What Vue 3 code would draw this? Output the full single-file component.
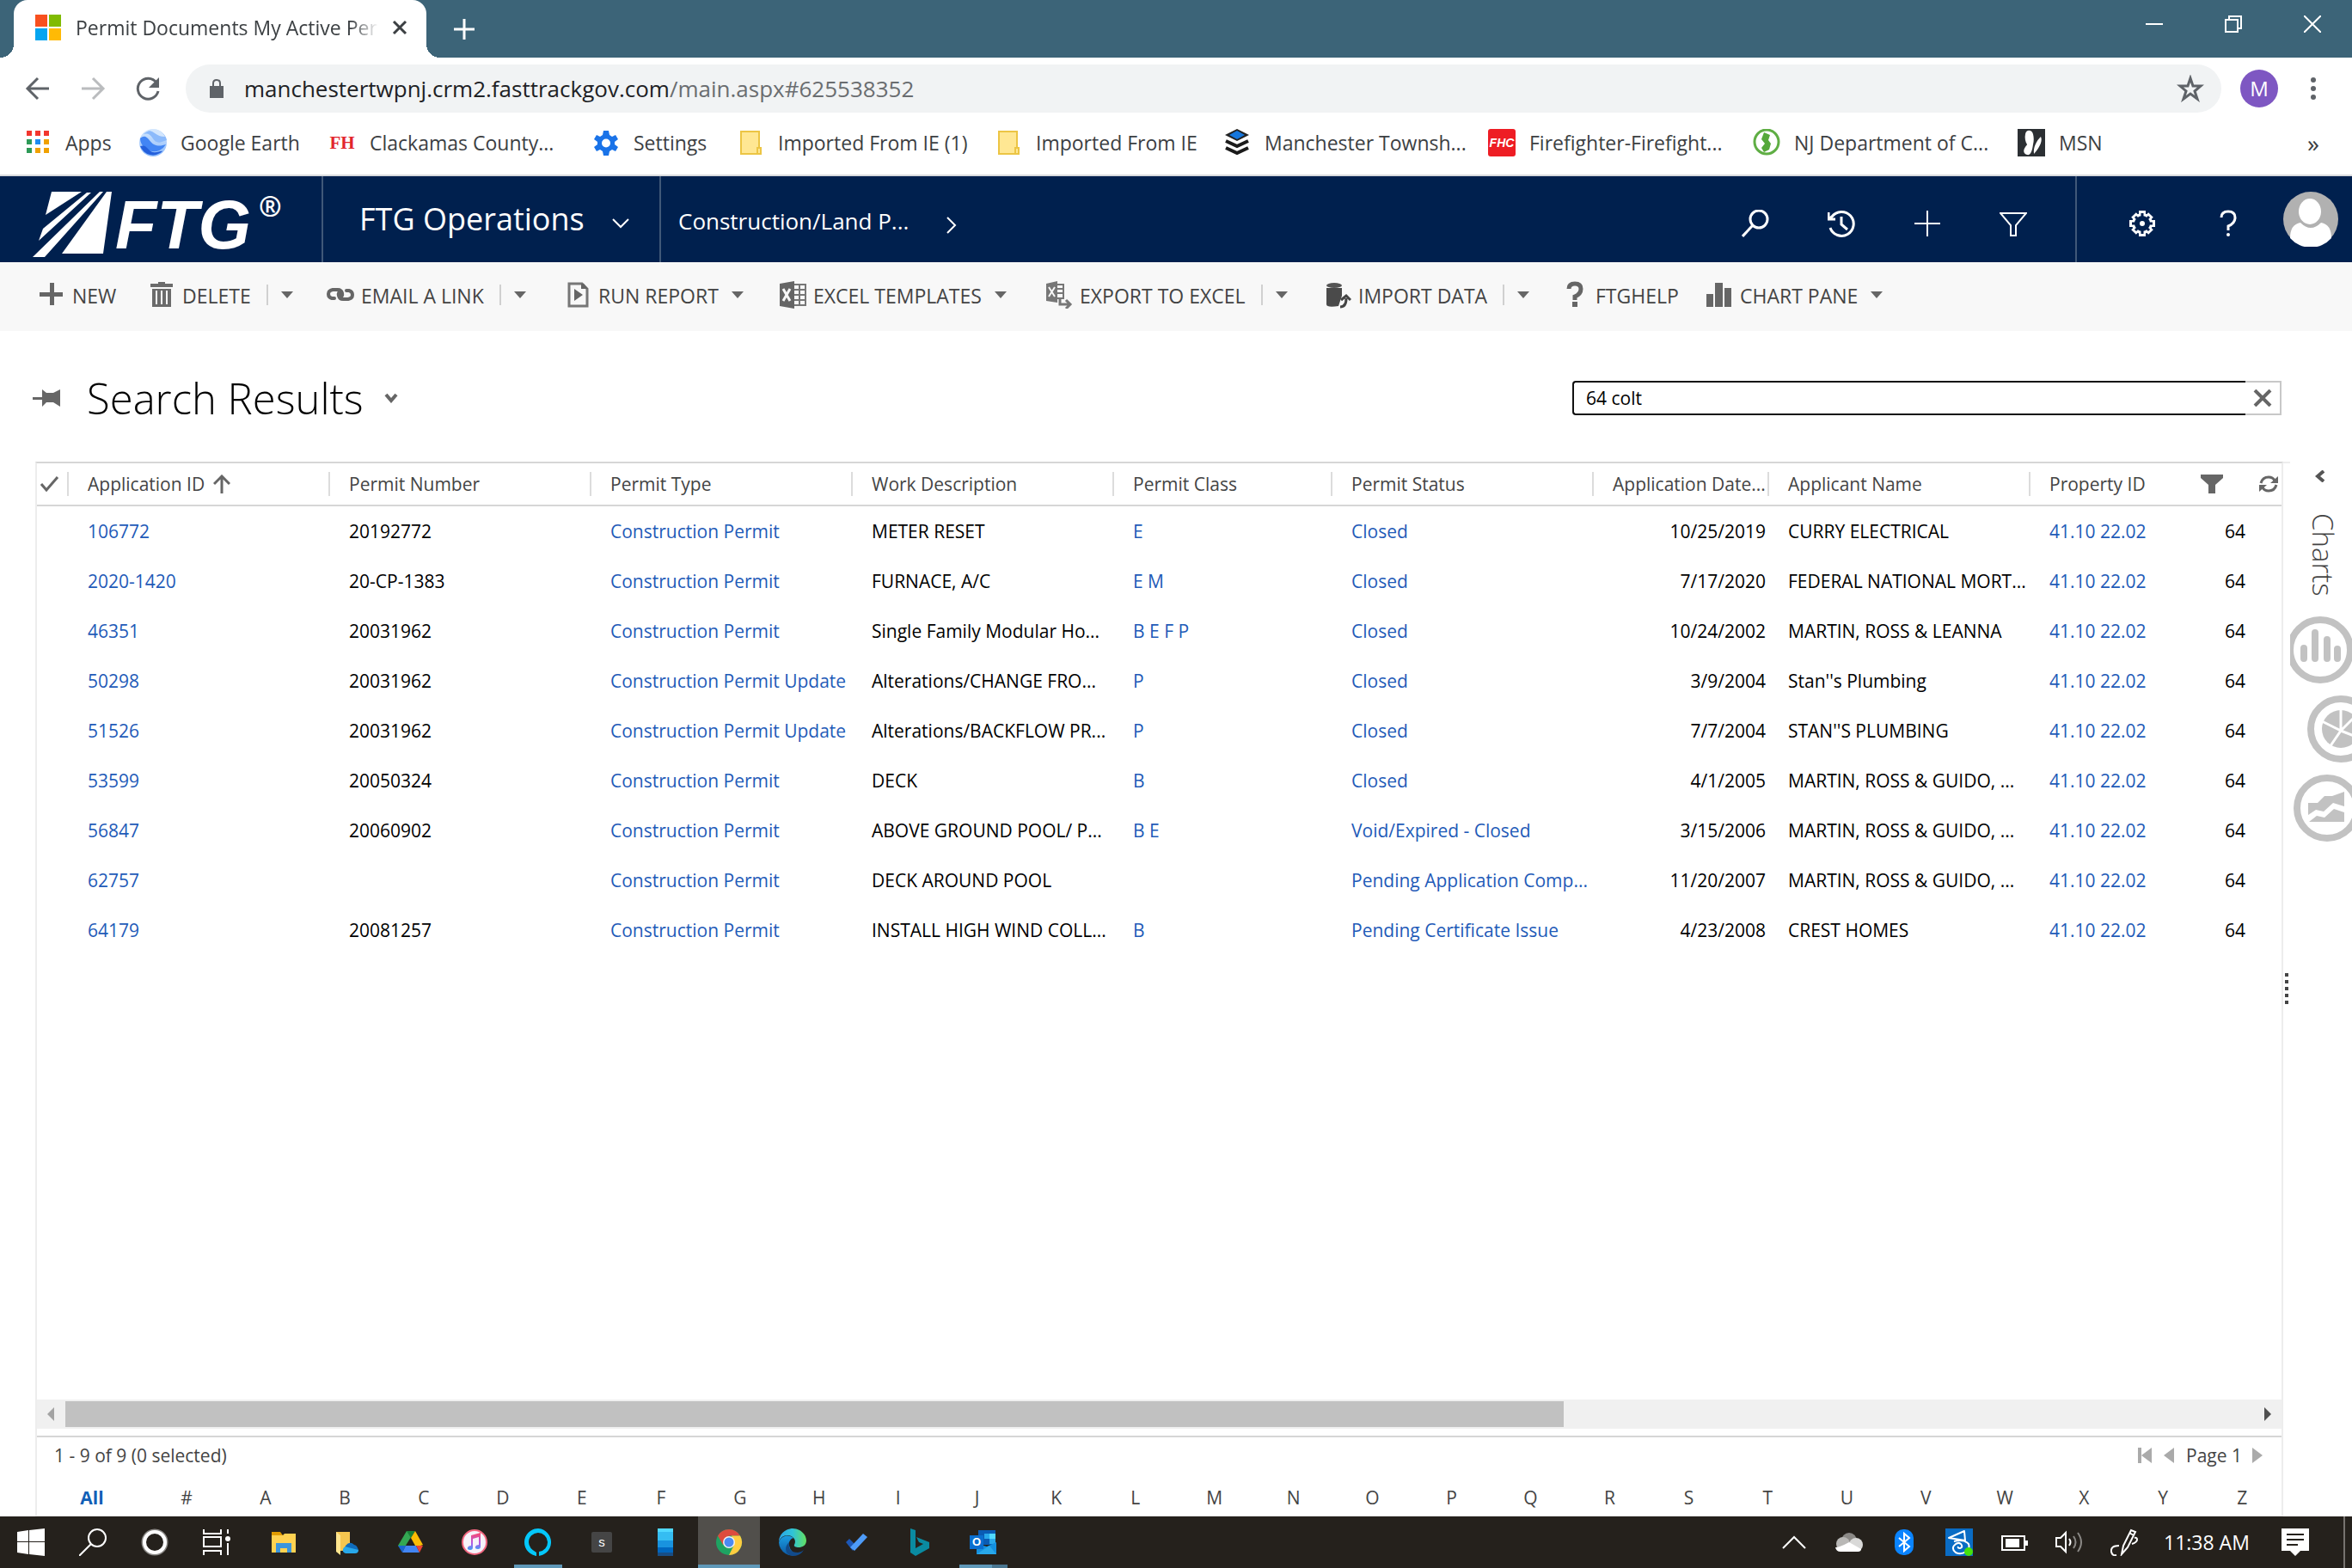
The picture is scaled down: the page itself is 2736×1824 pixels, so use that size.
<script setup>
import { ref } from 'vue'

const bookmarks = [
  { label: 'Apps', icon: 'apps' },
  { label: 'Google Earth', icon: 'earth' },
  { label: 'Clackamas County...', badge: 'FH' },
  { label: 'Settings', icon: 'settings' },
  { label: 'Imported From IE (1)', icon: 'folder' },
  { label: 'Imported From IE', icon: 'folder' },
  { label: 'Manchester Townsh...', icon: 'stack' },
  { label: 'Firefighter-Firefight...', badge: 'FHC' },
  { label: 'NJ Department of C...', icon: 'nj' },
  { label: 'MSN', icon: 'msn' }
]

const commands = [
  { label: 'NEW', icon: 'new' },
  { label: 'DELETE', icon: 'trash', split: true, menu: true },
  { label: 'EMAIL A LINK', icon: 'link', split: true, menu: true },
  { label: 'RUN REPORT', icon: 'report', menu: true },
  { label: 'EXCEL TEMPLATES', icon: 'excel', menu: true },
  { label: 'EXPORT TO EXCEL', icon: 'export', split: true, menu: true },
  { label: 'IMPORT DATA', icon: 'import', split: true, menu: true },
  { label: 'FTGHELP', icon: 'helpbold' },
  { label: 'CHART PANE', icon: 'bars', menu: true }
]

const columns = [
  'Application ID', 'Permit Number', 'Permit Type', 'Work Description',
  'Permit Class', 'Permit Status', 'Application Date...', 'Applicant Name'
]

const P = 'Construction Permit'
const U = 'Construction Permit Update'
const rows = [
  ['106772', '20192772', P, 'METER RESET', 'E', 'Closed', '10/25/2019', 'CURRY ELECTRICAL'],
  ['2020-1420', '20-CP-1383', P, 'FURNACE, A/C', 'E M', 'Closed', '7/17/2020', 'FEDERAL NATIONAL MORT...'],
  ['46351', '20031962', P, 'Single Family Modular Ho...', 'B E F P', 'Closed', '10/24/2002', 'MARTIN, ROSS & LEANNA'],
  ['50298', '20031962', U, 'Alterations/CHANGE FRO...', 'P', 'Closed', '3/9/2004', "Stan''s Plumbing"],
  ['51526', '20031962', U, 'Alterations/BACKFLOW PR...', 'P', 'Closed', '7/7/2004', "STAN''S PLUMBING"],
  ['53599', '20050324', P, 'DECK', 'B', 'Closed', '4/1/2005', 'MARTIN, ROSS & GUIDO, ...'],
  ['56847', '20060902', P, 'ABOVE GROUND POOL/ P...', 'B E', 'Void/Expired - Closed', '3/15/2006', 'MARTIN, ROSS & GUIDO, ...'],
  ['62757', '', P, 'DECK AROUND POOL', '', 'Pending Application Comp...', '11/20/2007', 'MARTIN, ROSS & GUIDO, ...'],
  ['64179', '20081257', P, 'INSTALL HIGH WIND COLL...', 'B', 'Pending Certificate Issue', '4/23/2008', 'CREST HOMES']
]
const linked = [0, 2, 4, 5]

const letters = ['All', '#', ...'ABCDEFGHIJKLMNOPQRSTUVWXYZ']

const system = [['start', 'Start'], ['lens', 'Search'], ['cortana', 'Cortana'], ['taskview', 'Task View']]
const pinned = [
  { icon: 'explorer', name: 'File Explorer' },
  { icon: 'odfolder', name: 'OneDrive folder' },
  { icon: 'gdrive', name: 'Google Drive' },
  { icon: 'itunes', name: 'iTunes' },
  { icon: 'alexa', name: 'Alexa', state: 'running' },
  { icon: 'sapp', name: 'Sway', mark: 's' },
  { icon: 'phone', name: 'Your Phone' },
  { icon: 'chrome', name: 'Chrome', state: 'active' },
  { icon: 'edge', name: 'Edge' },
  { icon: 'todo', name: 'To Do' },
  { icon: 'bing', name: 'Bing' },
  { icon: 'outlook', name: 'Outlook', state: 'running multi', mark: 'O' }
]
const tray = [
  ['up', 'Show hidden icons'], ['cloud', 'OneDrive'], ['bluetooth', 'Bluetooth'], ['agent', 'Agent'],
  ['battery', 'Battery'], ['volume', 'Volume'], ['pen', 'Windows Ink']
]

const query = ref('64 colt')
</script>

<template>
  <svg class="defs" aria-hidden="true">
    <defs>
      <linearGradient id="gEarth" x1="0" y1="0" x2="0" y2="1"><stop offset="0" stop-color="#d5e8fd" /><stop offset="1" stop-color="#8ab9fb" /></linearGradient>
      <linearGradient id="gEdge" x1="0" y1="0" x2="1" y2="0"><stop offset="0" stop-color="#2aa5e8" /><stop offset=".5" stop-color="#2fc3d8" /><stop offset="1" stop-color="#63e060" /></linearGradient>
      <linearGradient id="gEdge2" x1="0" y1="0" x2="0" y2="1"><stop offset="0" stop-color="#1b9de2" /><stop offset="1" stop-color="#0c59a4" /></linearGradient>
      <linearGradient id="gTunes" x1="0" y1="0" x2="0" y2="1"><stop offset="0" stop-color="#fb4a6a" /><stop offset=".6" stop-color="#b558e6" /><stop offset="1" stop-color="#3aa0f5" /></linearGradient>
    </defs>

    <symbol id="apps" viewBox="0 0 32 32">
      <path fill="#f2362e" d="M3 2h6v6H3zM13 2h6v6h-6zM23 2h6v6h-6z" /><path fill="#2e9a57" d="M3 12h6v6H3z" /><path fill="#1e8cf0" d="M13 12h6v6h-6z" /><path fill="#f0a100" d="M23 12h6v6h-6zM13 22h6v6h-6zM23 22h6v6h-6z" /><path fill="#2e9a57" d="M3 22h6v6H3z" />
    </symbol>
    <symbol id="earth" viewBox="0 0 32 32">
      <circle cx="16" cy="16" r="16" fill="url(#gEarth)" /><path fill="#4285f4" d="M1 11c8-7 10 4 16 7s10 1 14 0A16 16 0 0 1 1 11z" /><path fill="#2460dc" d="M1 20c8-3 9 6 15 7 5 1 9-2 11-1A16 16 0 0 1 1 20z" /><path fill="#8cbafb" d="M5 6c9-3 10 7 15 9s8-1 12-2C30 2 16-4 5 6z" /><path fill="#d3e6fd" d="M10 2c8 0 9 7 20 7C26 1 18-2 10 2z" />
    </symbol>
    <symbol id="settings" viewBox="0 0 32 32">
      <path fill="#1a73e8" fill-rule="evenodd" d="M13 2h6l1 5 3 2 4-2 3 5-4 3v3l4 3-3 5-4-2-3 2-1 5h-6l-1-5-3-2-4 2-3-5 4-3v-3l-4-3 3-5 4 2 3-2zM16 11.500a5 5 0 1 0 0 10 5 5 0 0 0 0-10z" />
    </symbol>
    <symbol id="folder" viewBox="0 0 32 32">
      <path fill="#ffe793" stroke="#ecc544" stroke-width="2" d="M5 3h21v19h2v7H5z" /><path fill="none" stroke="#ecc544" stroke-width="2" d="M24 29v-7h3" />
    </symbol>
    <symbol id="stack" viewBox="0 0 32 32">
      <path fill="#222" d="M16 0l14 7-14 7L2 7z" /><path fill="#1576dc" d="M16 2l9 5-9 5-9-5z" /><path fill="none" stroke="#1b1b1b" stroke-width="4" d="M3 14l13 6 13-6M3 22l13 6 13-6" />
    </symbol>
    <symbol id="nj" viewBox="0 0 32 32">
      <circle cx="16" cy="15" r="14" fill="#fff" stroke="#5fae44" stroke-width="3" /><path fill="#55a83a" d="M13 4l7 3-2 6 3 4-2 7-6 3-3-5 4-5-4-5z" />
    </symbol>
    <symbol id="msn" viewBox="0 0 32 32">
      <rect width="32" height="32" fill="#2b2f33" /><path fill="#fff" d="M9 6c1-6 8-5 9 0 1 4 1 8 0 12-1 8-3 13-7 12s-5-5-2-9c1-2 2-2 2-3-2-3-3-8-2-12zM27 9c2 4 0 11-8 20-1-8 3-15 8-20z" />
    </symbol>

    <symbol id="new" viewBox="0 0 32 32"><path fill="#666" d="M14 2h5v11h10v5H19v10h-5V18H2v-5h12z" /></symbol>
    <symbol id="trash" viewBox="0 0 32 32"><path fill="#6b6b6b" fill-rule="evenodd" d="M12 1h8v2h9v4H3V3h9zM5 9h22v21H5zM9 11v16h2V11zM15 11v16h2V11zM21 11v16h2V11z" /></symbol>
    <symbol id="link" viewBox="0 0 32 32"><path fill="none" stroke="#666" stroke-width="4" stroke-linecap="round" stroke-linejoin="round" d="M9 20H6q-4-1-4-5t5-5h6q4 0 5 4 1 4-3 5M23 11h3q4 1 4 5t-5 5h-6q-4 0-5-4-1-4 3-5" /></symbol>
    <symbol id="report" viewBox="0 0 32 32"><path fill="none" stroke="#777" stroke-width="3" d="M6 3h15l6 6v20H6z" /><path fill="#666" d="M12 9l10 7-10 7zM20 3h3l5 6h-8z" /></symbol>
    <symbol id="excel" viewBox="0 0 32 32"><path fill="none" stroke="#777" stroke-width="2" d="M17 4h14v24H17M17 10h14M17 16h14M17 22h14M24 4v24" /><path fill="#666" d="M1 3l17-3v32L1 29z" /><path stroke="#f8f8f8" stroke-width="3" d="M5 9l8 14M13 9L5 23" /></symbol>
    <symbol id="export" viewBox="0 0 32 32"><path fill="none" stroke="#777" stroke-width="2" d="M13 4h8v16H13M14 9h7M14 14h7" /><path fill="#777" d="M1 3l13-3v25L1 23z" /><path stroke="#f8f8f8" stroke-width="2" d="M4 7l7 11M11 7L4 18" /><path fill="none" stroke="#777" stroke-width="3" d="M17 21v6h11M24 22l5 5-5 5" /></symbol>
    <symbol id="import" viewBox="0 0 32 32"><path fill="#4a4a4a" d="M3 8h18v9l-4 12q-14 2-14-2z" /><ellipse cx="12" cy="5" rx="9" ry="3" fill="#555" /><path fill="none" stroke="#444" stroke-width="3" d="M19 30q7 0 7-10M20 22l6-5 5 5" /></symbol>
    <symbol id="helpbold" viewBox="0 0 32 32"><path fill="none" stroke="#666" stroke-width="5" d="M9 9q0-6 7-6t7 6-7 9v4" /><path fill="#666" d="M13 24h6v6h-6z" /></symbol>
    <symbol id="bars" viewBox="0 0 32 32"><path fill="#666" d="M1 15h8v15H1zM11 2h9v28h-9zM22 8h8v22h-8z" /></symbol>

    <symbol id="start" viewBox="0 0 32 32"><path fill="#fff" d="M0 4l13-2v13H0zM14 2l18-2v15H14zM0 16h13v14L0 28zM14 16h18v16l-18-2z" /></symbol>
    <symbol id="lens" viewBox="0 0 32 32"><g fill="none" stroke="#fff" stroke-width="2"><circle cx="21" cy="11" r="10" /><path d="M14 18L0 32" /></g></symbol>
    <symbol id="cortana" viewBox="0 0 32 32"><circle cx="16" cy="16" r="14" fill="none" stroke="#8a8885" stroke-width="3" /><circle cx="16" cy="16" r="12" fill="none" stroke="#fff" stroke-width="4" /></symbol>
    <symbol id="taskview" viewBox="0 0 32 32"><path fill="none" stroke="#fff" stroke-width="2" d="M1 1v5h20V1M1 10h20v11H1zM1 31v-5h20v5M29 1v5M29 17v14" /><circle cx="29" cy="12" r="3" fill="#fff" /></symbol>
    <symbol id="explorer" viewBox="0 0 32 32"><path fill="#e09b00" d="M2 4h10l3 4H2z" /><path fill="#ffd251" d="M2 8h13l2-2h13v22H2z" /><path fill="#3b95dc" d="M7 28V17h18v11h-5v-5h-8v5z" /></symbol>
    <symbol id="odfolder" viewBox="0 0 32 32"><path fill="#f6c64f" d="M3 4h16v22H3z" /><path fill="#ffe58e" d="M3 4l5 4v23l-5-4z" /><path fill="#0f6cbd" d="M14 20q5-6 10-1 3 0 5 6H12z" /><path fill="#28a8ea" d="M14 29q-4-1-3-5t6-2l12 3q0 4-4 4z" /></symbol>
    <symbol id="gdrive" viewBox="0 0 32 32"><path fill="#34a853" d="M11 3h5l2 4L6 26l-5-6z" /><path fill="#188038" d="M11 3h10l-5 8z" /><path fill="#fbbc04" d="M21 3l9 16-3 1h-6l-5-9z" /><path fill="#1967d2" d="M1 20h9l-4 8z" /><path fill="#4285f4" d="M10 20h12l4 8H6z" /><path fill="#ea4335" d="M22 20h8l-4 8z" /></symbol>
    <symbol id="itunes" viewBox="0 0 32 32"><circle cx="16" cy="16" r="14" fill="#f6f3fa" stroke="#f26780" stroke-width="2" /><path fill="url(#gTunes)" d="M12 8l11-3v16q0 3-3 3-4 0-3-3 1-2 4-2v-9l-7 2v10q0 3-3 3-4 0-3-3 1-2 4-2z" /></symbol>
    <symbol id="alexa" viewBox="0 0 32 32"><path fill="#04c8fb" fill-rule="evenodd" d="M16 0a16 16 0 1 1-2 32V28Q5 23 5 16a11 11 0 1 1 12 11v5h-1A16 16 0 0 1 16 0z" /></symbol>
    <symbol id="sapp" viewBox="0 0 32 32"><rect x="4" y="4" width="24" height="24" rx="2" fill="#454545" /></symbol>
    <symbol id="phone" viewBox="0 0 32 32"><path fill="#50d9ff" d="M7 0h18v4H7z" /><path fill="#35bdf2" d="M7 4h18v10H7z" /><path fill="#1993df" d="M7 14h18v8H7z" /><path fill="#0067bf" d="M7 22h18v6H7z" /><path fill="#184e86" d="M7 28h18v4H7z" /></symbol>
    <symbol id="chrome" viewBox="0 0 32 32"><circle cx="16" cy="16" r="15" fill="#1ea362" /><path fill="#dd4b3e" d="M3 8.500A15 15 0 0 1 29 8.500H16L9 19z" /><path fill="#ffcd40" d="M29 8.500A15 15 0 0 1 16 31l6-12-3-10.500z" /><circle cx="16" cy="16" r="7" fill="#f1f1f1" /><circle cx="16" cy="16" r="5.500" fill="#4a8af4" /></symbol>
    <symbol id="edge" viewBox="0 0 32 32"><path fill="url(#gEdge2)" d="M0 16C3 7 13 7 17 11q-6 2-5 9 2 9 11 10A16 16 0 0 1 0 16z" /><path fill="url(#gEdge)" d="M0 15C1 3 12 0 16 0c9 0 16 7 16 14 0 6-5 8-9 8-3 0-6-1-5-3 3-5-1-11-8-11Q3 8 0 15z" /><path fill="#124b8b" d="M12 16q-2 12 10 12 4 0 7-3-4 7-12 7C8 32 5 22 12 16z" /></symbol>
    <symbol id="todo" viewBox="0 0 32 32"><path fill="#1c57b6" d="M4 16l4-4 6 6-2 8z" /><path fill="#4e9bf7" d="M9 22L24 6l5 4-15 16z" /></symbol>
    <symbol id="bing" viewBox="0 0 32 32"><path fill="#0a8ba1" d="M5 0l6 2v21l9-5-5-2-3-6 15 6v7l-16 9-6-4z" /></symbol>
    <symbol id="outlook" viewBox="0 0 32 32"><path fill="#0a5cb4" d="M10 2h20v17H10z" /><path fill="#28a8ea" d="M17 6h6v6h-6zM23 12h7v6h-7z" /><path fill="#50d9ff" d="M23 6h7v6h-7z" /><path fill="#1490df" d="M8 18l12 3 11-5v14H8z" /><path fill="#28a8ea" d="M8 30l15-10 8 10z" /><path fill="#0a6fd0" d="M0 8h16v16H0z" /></symbol>

    <symbol id="up" viewBox="0 0 32 32"><path fill="none" stroke="#fff" stroke-width="2" d="M3 23l13-13 13 13" /></symbol>
    <symbol id="cloud" viewBox="0 0 32 32"><circle cx="16" cy="14" r="9" fill="#8b8986" /><circle cx="9" cy="18" r="8" fill="#b9b8b6" /><circle cx="24" cy="19" r="8" fill="#d9d9d8" /><path fill="#fff" d="M0 22q5 0 16-6l14 8q0 3-4 3H6q-5 0-6-5z" /></symbol>
    <symbol id="bluetooth" viewBox="0 0 32 32"><rect x="5" y="1" width="22" height="30" rx="10" fill="#0a84ff" /><path fill="none" stroke="#fff" stroke-width="2" d="M10 11l12 10-6 5V6l6 5-12 10" /></symbol>
    <symbol id="agent" viewBox="0 0 32 32"><rect width="32" height="32" fill="#0a6cc4" /><path fill="none" stroke="#fff" stroke-width="2" stroke-linejoin="round" d="M4 11L22 3l1 11zM10 15q12-3 17 3 2 6-3 9-6 4-12 1-5-4-2-8 4-5 8-2 3 4-1 5-3 0-2-2" /><circle cx="27" cy="27" r="5" fill="#45e20c" /></symbol>
    <symbol id="battery" viewBox="0 0 32 32"><path fill="none" stroke="#fff" stroke-width="2" d="M2 9h26v16H2z" /><path fill="#fff" d="M6 12h16v10H6zM29 14h3v6h-3z" /></symbol>
    <symbol id="volume" viewBox="0 0 32 32"><g fill="none" stroke="#fff" stroke-width="2"><path d="M1 11h5l6-6v22l-6-6H1z" /><path d="M16 12q3 4 0 8" /><path stroke="#8a8885" d="M21 9q5 7 0 14M26 5q8 11 0 22" /></g></symbol>
    <symbol id="pen" viewBox="0 0 32 32"><path fill="none" stroke="#fff" stroke-width="2" d="M13 30l2-10L24 2l5 2-9 18zM22 5l5 3M10 20q-10 0-9 7 1 5 6 4M25 18q6-2 6-5t-3-2" /></symbol>
  </svg>

  <div class="screen">
    <header class="browser">
      <div class="tabstrip">
        <div class="tab">
          <svg class="i32" viewBox="0 0 32 32"><path fill="#f8501f" d="M1 1h14v14H1z" /><path fill="#80bb03" d="M17 1h14v14H17z" /><path fill="#04a5f0" d="M1 17h14v14H1z" /><path fill="#ffba05" d="M17 17h14v14H17z" /></svg>
          <span class="tab-title">Permit Documents My Active Permits</span>
          <button class="plain" aria-label="Close tab"><svg width="18" height="18" viewBox="0 0 18 18"><path fill="none" stroke="#3c4043" stroke-width="3" d="M2 2l14 14M16 2L2 16" /></svg></button>
        </div>
        <button class="plain newtab" aria-label="New tab"><svg width="24" height="24" viewBox="0 0 24 24"><path stroke="#fff" stroke-width="3" d="M12 0v24M0 12h24" /></svg></button>
        <div class="winbtns">
          <button class="plain" aria-label="Minimize"><svg width="20" height="20" viewBox="0 0 20 20"><path stroke="#fff" stroke-width="2" d="M0 10h20" /></svg></button>
          <button class="plain" aria-label="Restore"><svg width="20" height="20" viewBox="0 0 20 20"><path fill="none" stroke="#fff" stroke-width="2" d="M1 5h14v14H1zM5 5V1h14v14h-4" /></svg></button>
          <button class="plain" aria-label="Close window"><svg width="20" height="20" viewBox="0 0 20 20"><path stroke="#fff" stroke-width="2" d="M0 0l20 20M20 0L0 20" /></svg></button>
        </div>
      </div>

      <div class="toolbar">
        <button class="plain nav" aria-label="Back"><svg class="i32" viewBox="0 0 32 32"><path fill="none" stroke="#5f6368" stroke-width="3" d="M29 16H5M16 4L4 16l12 12" /></svg></button>
        <button class="plain nav" aria-label="Forward"><svg class="i32" viewBox="0 0 32 32"><path fill="none" stroke="#babcbe" stroke-width="3" d="M3 16h24M16 4l12 12-12 12" /></svg></button>
        <button class="plain nav" aria-label="Reload"><svg class="i32" viewBox="0 0 32 32"><path fill="none" stroke="#5f6368" stroke-width="3" d="M26 9a12 12 0 1 0 2 10" /><path fill="#5f6368" d="M29 3v12H17z" /></svg></button>
        <div class="omnibox">
          <svg width="16" height="22" viewBox="0 0 16 22"><path fill="#5f6368" d="M0 8h16v14H0z" /><path fill="none" stroke="#5f6368" stroke-width="2" d="M4 9V5q0-4 4-4t4 4v4" /></svg>
          <span class="url">manchestertwpnj.crm2.fasttrackgov.com<span>/main.aspx#625538352</span></span>
          <button class="plain" aria-label="Bookmark this page"><svg class="i32" viewBox="0 0 32 32"><path fill="none" stroke="#5f6368" stroke-width="3" d="M16 4l3 9h9l-7 6 3 9-8-6-8 6 3-9-7-6h9z" /></svg></button>
        </div>
        <button class="plain profile">M</button>
        <button class="plain dots" aria-label="Menu"><svg width="6" height="28" viewBox="0 0 6 28"><g fill="#5f6368"><circle cx="3" cy="4" r="3" /><circle cx="3" cy="14" r="3" /><circle cx="3" cy="24" r="3" /></g></svg></button>
      </div>

      <nav class="bookmarks">
        <a v-for="(b, i) in bookmarks" :key="i" href="#">
          <span v-if="b.badge" class="badge" :class="b.badge.toLowerCase()">{{ b.badge }}</span>
          <svg v-else class="i32"><use :href="'#' + b.icon" /></svg>
          <span>{{ b.label }}</span>
        </a>
        <button class="plain more" aria-label="More bookmarks">»</button>
      </nav>
    </header>

    <header class="crm">
      <a class="logo" href="#">
        <svg width="300" height="88" viewBox="0 0 300 88" fill="#fff" aria-label="FTG">
          <path d="M26 8h35L19 35zM67 9h5L11 65l5-14zM82 8h4L18 84H4zM90 8h6L86 80H38z" />
          <text x="100" y="74" font-family="Liberation Sans, sans-serif" font-weight="700" font-style="italic" font-size="79">FTG</text>
          <text x="267" y="37" font-family="Open Sans, sans-serif" font-weight="700" font-size="32">®</text>
        </svg>
      </a>
      <button class="plain area">FTG Operations<svg width="20" height="12" viewBox="0 0 20 12"><path fill="none" stroke="#fff" stroke-width="2" d="M1 1l9 9 9-9" /></svg></button>
      <button class="plain sub">Construction/Land P...<svg width="12" height="20" viewBox="0 0 12 20"><path fill="none" stroke="#fff" stroke-width="2" d="M1 1l9 9-9 9" /></svg></button>
      <div class="crm-tools">
        <button class="plain" aria-label="Search"><svg class="i32" viewBox="0 0 32 32"><g fill="none" stroke="#fff" stroke-width="3"><circle cx="20" cy="11" r="10" /><path d="M13 18L1 31" /></g></svg></button>
        <button class="plain" aria-label="Recent"><svg class="i32" viewBox="0 0 32 32"><path fill="none" stroke="#fff" stroke-width="3" d="M3 21A14 14 0 1 0 5 8L1 11M1 3v8h8M16 8v9l7 6" /></svg></button>
        <button class="plain" aria-label="Create"><svg class="i32" viewBox="0 0 32 32"><path stroke="#fff" stroke-width="2" d="M16 1v30M1 16h30" /></svg></button>
        <button class="plain" aria-label="Advanced find"><svg class="i32" viewBox="0 0 32 32"><path fill="none" stroke="#fff" stroke-width="2" d="M1 4h30L19 18v12h-6V18z" /></svg></button>
      </div>
      <div class="crm-user">
        <button class="plain" aria-label="Settings">
          <svg class="i32" viewBox="0 0 32 32">
            <path stroke="#fff" stroke-width="8" d="M16 1v30M1 16h30M6 6l20 20M26 6L6 26" />
            <circle cx="16" cy="16" r="12" fill="#fff" />
            <path stroke="#00204e" stroke-width="3" d="M16 4v24M4 16h24M8 8l16 16M24 8L8 24" />
            <circle cx="16" cy="16" r="9" fill="#00204e" /><circle cx="16" cy="16" r="3" fill="#fff" />
          </svg>
        </button>
        <button class="plain" aria-label="Help"><svg class="i32" viewBox="0 0 32 32"><path fill="none" stroke="#fff" stroke-width="3" d="M8 9q0-7 8-7t8 7-8 10v5" /><circle cx="16" cy="29" r="2" fill="#fff" /></svg></button>
        <svg class="avatar" viewBox="0 0 64 64"><circle cx="32" cy="32" r="32" fill="#b1b1b1" /><path fill="#fff" d="M8 54q0-16 12-18 12 12 24 0 12 2 12 18a32 32 0 0 1-48 0z" /><ellipse cx="31" cy="23" rx="13" ry="15" fill="#fff" /></svg>
      </div>
    </header>

    <div class="commands">
      <div v-for="c in commands" :key="c.label" class="cmd">
        <button class="plain"><svg class="i32"><use :href="'#' + c.icon" /></svg><span>{{ c.label }}</span></button>
        <i v-if="c.split" class="split"></i>
        <button v-if="c.menu" class="plain caret" :aria-label="c.label + ' menu'"><svg width="14" height="8" viewBox="0 0 14 8"><path fill="#666" d="M0 0h14L7 8z" /></svg></button>
      </div>
    </div>

    <main class="main">
      <div class="heading">
        <svg width="32" height="20" viewBox="0 0 32 20"><path fill="#666" d="M0 9h11V0l5 4h8l8-4v20l-8-5h-8l-5 5v-8H0z" /></svg>
        <h1>Search Results</h1>
        <button class="plain" aria-label="Choose view"><svg width="16" height="12" viewBox="0 0 16 12"><path fill="none" stroke="#666" stroke-width="4" d="M2 2l6 7 6-7" /></svg></button>
        <div class="search">
          <input v-model="query" aria-label="Search for records" />
          <button class="plain" aria-label="Clear search"><svg width="22" height="20" viewBox="0 0 22 20"><path stroke="#666" stroke-width="4" d="M2 1l18 18M20 1L2 19" /></svg></button>
        </div>
      </div>

      <div class="work">
        <section class="grid">
          <div class="scroll">
            <table>
              <colgroup>
                <col class="c-check" /><col class="c-std" /><col class="c-std" /><col class="c-std" /><col class="c-std" /><col class="c-class" /><col class="c-std" /><col class="c-date" /><col class="c-std" /><col class="c-prop" /><col />
              </colgroup>
              <thead>
                <tr>
                  <th class="check"><div><svg width="22" height="18" viewBox="0 0 22 18"><path fill="none" stroke="#666" stroke-width="3" d="M1 9l6 7L20 1" /></svg></div></th>
                  <th v-for="(c, i) in columns" :key="c"><div>{{ c }}<svg v-if="i === 0" width="20" height="22" viewBox="0 0 20 22"><path fill="none" stroke="#666" stroke-width="3" d="M10 22V2M1 11l9-9 9 9" /></svg></div></th>
                  <th class="bare">Property ID</th>
                  <th class="tools">
                    <div>
                      <button class="plain" aria-label="Filter"><svg width="26" height="22" viewBox="0 0 26 22"><path fill="#666" d="M0 0h26v4l-9 8v10H9V12L0 4z" /></svg></button>
                      <button class="plain" aria-label="Refresh"><svg width="22" height="20" viewBox="0 0 22 20"><path fill="none" stroke="#666" stroke-width="3" d="M2 9q2-7 9-7 5 0 7 4M20 11q-2 7-9 7-5 0-7-4" /><path fill="#666" d="M22 1v8h-9zM0 19v-8h9z" /></svg></button>
                    </div>
                  </th>
                </tr>
              </thead>
              <tbody>
                <tr v-for="r in rows" :key="r[0]">
                  <td></td>
                  <td v-for="(v, i) in r" :key="i" :class="{ date: i === 6 }"><a v-if="linked.includes(i)" href="#">{{ v }}</a><template v-else>{{ v }}</template></td>
                  <td><a href="#">41.10 22.02</a></td>
                  <td class="num">64</td>
                </tr>
              </tbody>
            </table>
          </div>
          <div class="hbar">
            <svg width="8" height="16" viewBox="0 0 8 16"><path fill="#a3a3a3" d="M8 0v16L0 8z" /></svg>
            <div class="track"><div class="thumb"></div></div>
            <svg width="8" height="16" viewBox="0 0 8 16"><path fill="#505050" d="M0 0v16l8-8z" /></svg>
          </div>
          <div class="status">
            <span>1 - 9 of 9 (0 selected)</span>
            <div class="pager">
              <button class="plain" aria-label="First page"><svg width="16" height="18" viewBox="0 0 16 18"><path fill="#aaa" d="M0 0h4v18H0zM16 0v18L4 9z" /></svg></button>
              <button class="plain" aria-label="Previous page"><svg width="12" height="18" viewBox="0 0 12 18"><path fill="#aaa" d="M12 0v18L0 9z" /></svg></button>
              <span>Page 1</span>
              <button class="plain" aria-label="Next page"><svg width="12" height="18" viewBox="0 0 12 18"><path fill="#aaa" d="M0 0v18l12-9z" /></svg></button>
            </div>
          </div>
          <nav class="jump"><a v-for="l in letters" :key="l" href="#">{{ l }}</a></nav>
        </section>

        <div class="splitter"><svg width="4" height="36" viewBox="0 0 4 36"><path fill="#444" d="M0 0h4v4H0zM0 8h4v4H0zM0 16h4v4H0zM0 24h4v4H0zM0 32h4v4H0z" /></svg></div>

        <aside class="charts">
          <button class="plain expand" aria-label="Expand charts"><svg width="12" height="14" viewBox="0 0 12 14"><path fill="none" stroke="#555" stroke-width="4" d="M10 1L3 7l7 6" /></svg></button>
          <h2>Charts</h2>
          <svg class="disc" viewBox="0 0 78 78"><circle cx="39" cy="39" r="35" fill="none" stroke="#c2c2c2" stroke-width="8" /><path stroke="#c2c2c2" stroke-width="8" stroke-linecap="round" d="M20 37v12M33 19v30M47 27v22M59 38v11" /></svg>
          <svg class="disc pie" viewBox="0 0 78 78"><circle cx="39" cy="39" r="35" fill="none" stroke="#c2c2c2" stroke-width="8" /><circle cx="39" cy="39" r="22" fill="#c2c2c2" /><path stroke="#fff" stroke-width="3" fill="none" d="M39 41V16M39 41l18-18M39 41l23 9M39 41L26 60M39 41l-24-12" /></svg>
          <svg class="disc area-chart" viewBox="0 0 78 78"><circle cx="39" cy="39" r="35" fill="none" stroke="#c2c2c2" stroke-width="8" /><path fill="#c2c2c2" d="M17 33h11l8-8h9l14-5v17l-13-4-11 10-9-2-9 6zM18 55l9-7 9 2 11-10 12 4v11z" /></svg>
        </aside>
      </div>
    </main>

    <footer class="taskbar">
      <div class="sys"><button v-for="t in system" :key="t[0]" class="plain" :aria-label="t[1]"><svg class="i32"><use :href="'#' + t[0]" /></svg></button></div>
      <div class="pins">
        <button v-for="t in pinned" :key="t.icon" class="plain" :class="t.state" :aria-label="t.name">
          <svg class="i32"><use :href="'#' + t.icon" /></svg>
          <span v-if="t.mark" class="mark" :class="t.icon">{{ t.mark }}</span>
        </button>
      </div>
      <div class="tray">
        <button v-for="t in tray" :key="t[0]" class="plain" :aria-label="t[1]"><svg class="i32"><use :href="'#' + t[0]" /></svg></button>
        <time>11:38 AM</time>
        <button class="plain notes" aria-label="Notifications"><svg class="i32" viewBox="0 0 32 32"><path fill="#fff" d="M0 0h32v26H22l-6 6-6-6H0z" /><path stroke="#25211c" stroke-width="2" d="M6 7h20M6 13h20M6 19h13" /></svg></button>
        <i class="desk"></i>
      </div>
    </footer>
  </div>
</template>

<style>
body { margin: 0; background: #fff; }
</style>

<style scoped>
.defs { position: absolute; width: 0; height: 0; }
.screen { min-height: 100vh; display: flex; flex-direction: column; overflow: hidden; font-family: "Open Sans", "Noto Sans", sans-serif; font-size: 21px; line-height: 30px; color: #000; white-space: nowrap; }
.screen * { box-sizing: border-box; }
a { color: inherit; text-decoration: none; }
.plain { appearance: none; border: 0; padding: 0; margin: 0; background: none; font: inherit; color: inherit; display: flex; align-items: center; justify-content: center; }
svg { display: block; flex: none; }
.i32 { width: 32px; height: 32px; }

.tabstrip { height: 67px; background: #3c6478; display: flex; }
.tab { width: 480px; margin-left: 16px; padding: 0 24px 4px; background: #fff; border-radius: 16px 16px 0 0; display: flex; align-items: center; position: relative; }
.tab::before, .tab::after { content: ""; position: absolute; bottom: 0; width: 16px; height: 16px; }
.tab::before { left: -16px; background: radial-gradient(circle at 0 0, #3c6478 16px, #fff 16px); }
.tab::after { right: -16px; background: radial-gradient(circle at 100% 0, #3c6478 16px, #fff 16px); }
.tab-title { width: 352px; margin: 0 16px; flex: none; overflow: hidden; font-size: 23px; color: #3c4043; mask-image: linear-gradient(to right, #000 320px, transparent 352px); }
.newtab { width: 88px; }
.winbtns { margin-left: auto; display: flex; }
.winbtns button { width: 92px; height: 56px; }

.toolbar { height: 72px; padding: 0 42px 0 12px; display: flex; align-items: center; color: #202124; }
.nav { width: 64px; }
.omnibox { flex: 1; height: 56px; margin-left: 12px; padding: 0 20px 0 28px; border-radius: 28px; background: #f1f3f4; display: flex; align-items: center; }
.url { flex: 1; margin-left: 24px; font-size: 26px; }
.url span { color: #6a6d70; }
.profile { width: 44px; height: 44px; margin: 0 38px 0 22px; border-radius: 50%; background: #7e57c2; color: #fff; font-size: 24px; }

.bookmarks { height: 66px; padding: 0 38px 10px 28px; border-bottom: 2px solid #d9dadd; display: grid; grid-template-columns: 134px 220px 307px 168px 300px 266px 308px 308px 308px 1fr auto; align-items: center; font-size: 23px; color: #3c4043; }
.bookmarks a { display: flex; align-items: center; gap: 16px; }
.badge { width: 32px; height: 32px; line-height: 32px; text-align: center; font-weight: 700; }
.fh { color: #e2262d; font-family: "Liberation Serif", serif; font-size: 21px; }
.fhc { border-radius: 3px; background: #ee1d24; color: #fff; font-family: "Liberation Sans", sans-serif; font-style: italic; font-size: 14px; }
.more { font-size: 28px; }

.crm { height: 100px; background: #00204e; color: #fff; display: flex; }
.logo { width: 376px; padding: 10px 0 0 34px; border-right: 2px solid #405878; }
.area { width: 393px; padding-left: 42px; justify-content: flex-start; gap: 32px; font-size: 36px; border-right: 2px solid #405878; }
.area svg, .sub svg { margin-top: 10px; }
.sub { padding: 4px 0 0 20px; gap: 44px; font-size: 26px; }
.crm-tools { margin-left: auto; padding: 10px 22px 0 0; display: flex; border-right: 2px solid #405878; }
.crm-tools button, .crm-user button { width: 100px; }
.crm-user { padding: 10px 16px 0 26px; display: flex; }
.avatar { width: 64px; height: 64px; margin: 8px 0 0 14px; }

.commands { height: 80px; padding: 0 0 4px 44px; background: #f8f8f8; display: grid; grid-template-columns: 128px 208px 276px 250px 310px 324px 276px 168px 1fr; align-items: center; color: #444; font-size: 23px; }
.cmd { display: flex; align-items: center; }
.cmd > button:first-child { gap: 8px; }
.cmd span { padding-top: 2px; }
.split { width: 2px; height: 24px; margin-left: 18px; background: #d0d0d0; }
.caret { margin-left: 15px; }

.main { flex: 1; display: flex; flex-direction: column; }
.heading { height: 152px; padding: 4px 82px 0 38px; display: flex; align-items: center; }
h1 { margin: 0 24px 0 31px; font-size: 49px; line-height: 72px; font-weight: 300; }
.search { width: 825px; height: 40px; margin-left: auto; display: flex; }
.search input { flex: 1; min-width: 0; padding: 0 14px; border: 2px solid #111; border-right: 0; border-radius: 4px 0 0 4px; font: inherit; outline: 0; background: #fff; }
.search button { width: 42px; border: 2px solid #c8c8c8; border-left: 0; }

.work { flex: 1; display: flex; padding-left: 41px; }
.grid { flex: 1; min-width: 0; display: flex; flex-direction: column; border: 2px solid #ededed; border-top-color: #d6d6d6; border-bottom-width: 1px; }
.scroll { flex: 1; }
table { width: 100%; table-layout: fixed; border-collapse: separate; border-spacing: 0; }
.c-check { width: 37px; }
.c-std { width: 304px; }
.c-class { width: 254px; }
.c-date { width: 204px; }
.c-prop { width: 130px; }
th { height: 50px; padding: 0; border-bottom: 2px solid #d6d6d6; font-weight: 400; text-align: left; color: #444; }
th > div { height: 28px; padding-left: 22px; border-right: 2px solid #dcdcdc; display: flex; align-items: center; gap: 10px; }
.check > div { padding-left: 4px; }
.bare { padding-left: 22px; }
.tools > div { justify-content: flex-end; gap: 42px; padding-right: 4px; border: 0; }
td { height: 58px; padding: 0 0 0 22px; }
td a { color: #1f5bb8; }
.date { text-align: right; padding-right: 4px; }
.num { text-align: right; padding-right: 42px; }

.hbar { height: 34px; padding: 0 12px; background: #f0f0f0; display: flex; align-items: center; }
.track { flex: 1; margin: 0 13px; }
.thumb { width: 68.5%; height: 30px; background: #c1c1c1; }
.status { margin-top: 8px; height: 50px; padding: 0 22px 6px 20px; border-top: 2px solid #d6d6d6; display: flex; align-items: center; justify-content: space-between; color: #444; }
.pager { display: flex; align-items: center; }
.pager button { margin-right: 14px; }
.pager span { width: 77px; }
.pager button:last-child { margin: 0; }
.jump { height: 43px; display: flex; align-items: center; color: #444; text-align: center; }
.jump a { flex: 1; }
.jump a:first-child { flex: none; width: 128px; color: #1160b7; font-weight: 700; }

.splitter { width: 8px; padding-bottom: 4px; border-top: 2px solid #ededed; display: flex; align-items: center; justify-content: center; }
.charts { width: 72px; display: flex; flex-direction: column; align-items: flex-start; overflow: hidden; }
.expand { margin: 10px 0 0 29px; height: 14px; }
h2 { margin: 36px 0 20px 12px; writing-mode: vertical-rl; font-size: 33px; line-height: 52px; font-weight: 300; color: #444; height: 100px; }
.disc { width: 78px; height: 78px; margin-bottom: 14px; margin-left: -4px; }
.pie { margin-left: 20px; }
.area-chart { margin-left: 4px; }

.taskbar { height: 60px; background: #25211c; color: #fff; display: flex; }
.sys, .pins, .tray { display: flex; }
.sys button { width: 72px; }
.pins { margin-left: 6px; gap: 2px; }
.pins button { width: 72px; position: relative; }
.mark { position: absolute; top: 14px; left: 20px; width: 32px; height: 32px; line-height: 32px; text-align: center; font-family: "Liberation Sans", sans-serif; font-size: 15px; }
.mark.outlook { width: 16px; font-size: 13px; font-weight: 700; }
.pins .active { background: #514f4b; }
.pins .running::after, .pins .active::after { content: ""; position: absolute; left: 8px; right: 8px; bottom: 0; height: 4px; background: #5f98b8; }
.pins .active::after { left: 0; right: 0; }
.pins .multi::after { background: linear-gradient(to right, #5f98b8 38px, #4a7690 38px); }
.tray { margin-left: auto; align-items: center; }
.tray button { width: 64px; height: 60px; }
time { width: 127px; padding-left: 14px; font-size: 23px; }
.tray .notes { width: 80px; }
.desk { width: 26px; height: 60px; border-right: 2px solid #77736f; margin: 0 8px 0 -8px; }
</style>
